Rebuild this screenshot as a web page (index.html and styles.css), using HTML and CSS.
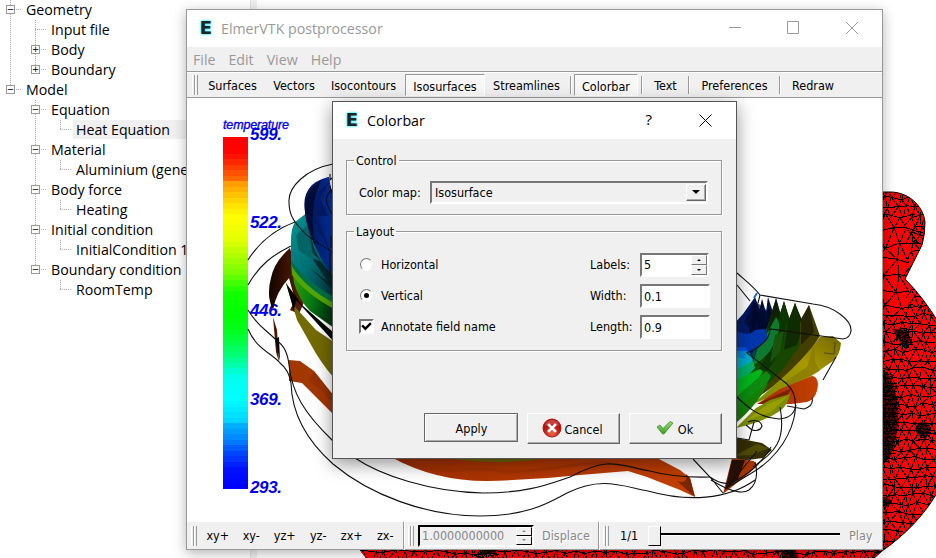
FILE: index.html
```html
<!DOCTYPE html>
<html lang="en">
<head>
<meta charset="utf-8">
<title>ElmerVTK postprocessor</title>
<link rel="stylesheet" href="styles.css">
</head>
<body>
<div class="desktop">
  <ul class="tree">
    <li><i class="cell full arm"><b class="box">−</b></i><span>Geometry</span></li>
    <li><i class="cell full"></i><i class="cell full arm"></i><span>Input file</span></li>
    <li><i class="cell full"></i><i class="cell full arm"><b class="box">+</b></i><span>Body</span></li>
    <li><i class="cell full"></i><i class="cell half arm"><b class="box">+</b></i><span>Boundary</span></li>
    <li><i class="cell half arm"><b class="box">−</b></i><span>Model</span></li>
    <li><i class="cell"></i><i class="cell full arm"><b class="box">−</b></i><span>Equation</span></li>
    <li><i class="cell"></i><i class="cell full"></i><i class="cell half arm"></i><span class="current">Heat Equation</span></li>
    <li><i class="cell"></i><i class="cell full arm"><b class="box">−</b></i><span>Material</span></li>
    <li><i class="cell"></i><i class="cell full"></i><i class="cell half arm"></i><span>Aluminium (generic)</span></li>
    <li><i class="cell"></i><i class="cell full arm"><b class="box">−</b></i><span>Body force</span></li>
    <li><i class="cell"></i><i class="cell full"></i><i class="cell half arm"></i><span>Heating</span></li>
    <li><i class="cell"></i><i class="cell full arm"><b class="box">−</b></i><span>Initial condition</span></li>
    <li><i class="cell"></i><i class="cell full"></i><i class="cell half arm"></i><span>InitialCondition 1</span></li>
    <li><i class="cell"></i><i class="cell half arm"><b class="box">−</b></i><span>Boundary condition</span></li>
    <li><i class="cell"></i><i class="cell"></i><i class="cell half arm"></i><span>RoomTemp</span></li>
  </ul>
  <div class="splitter"></div>
  <svg class="model" viewBox="257 0 679 558">
    <defs><clipPath id="body"><path d="M359 549L367 560H872L882 551C905 535 925 515 940 488V325Q924 298 905 279L922 245Q925 235 925 222C923 205 908 192 890 192H870V549Z"/></clipPath></defs>
    <g clip-path="url(#body)">
      <rect x="350" y="180" width="590" height="380" fill="#f00"/>
      <g fill="#6b0000"><ellipse cx="880" cy="416" rx="18" ry="47"/><path d="M892 329Q908 328 909 336L908 348Q900 345 892 329Z"/><circle cx="923" cy="429" r="7.5"/><circle cx="885" cy="502" r="5"/><path d="M779 548h16l5 12h-13Z"/><path d="M476 548h20v5h-14Z"/></g>
      <path id="mesh" class="mesh"/>
      <path id="finemesh" class="mesh"/>
    </g>
    <path d="M870 192H890C908 192 923 205 925 222Q925 235 922 245L905 279Q924 298 940 325M940 488C925 515 905 535 882 551L872 560" fill="none" stroke="#000"/>
  </svg>
</div>

<section class="window main">
  <header class="title">
    <span class="logo">E</span><h1>ElmerVTK postprocessor</h1>
    <svg class="controls" viewBox="0 0 140 20"><path d="M5 9.500h12M63.500 3.500h11v12h-11ZM122 4l12 12M134 4l-12 12" fill="none" stroke="#999"/></svg>
  </header>
  <nav class="menu"><span>File</span><span>Edit</span><span>View</span><span>Help</span></nav>
  <div class="toolbar top">
    <i class="grip"></i>
    <button class="w65">Surfaces</button><button class="w58">Vectors</button><button class="w81">Isocontours</button><button class="w80 on">Isosurfaces</button><button class="w83">Streamlines</button><i class="sep"></i><button class="w64 on">Colorbar</button><i class="sep"></i><button class="w43">Text</button><i class="sep"></i><button class="w87">Preferences</button><i class="sep"></i><button class="w62">Redraw</button>
  </div>
  <svg class="scene" viewBox="187 98 695 424">
    <defs>
      <linearGradient id="blue"><stop offset="0" stop-color="#001044"/><stop offset=".55" stop-color="#00237a"/><stop offset="1" stop-color="#0036b8"/></linearGradient>
      <linearGradient id="teal" x2="1" y2="1"><stop offset="0" stop-color="#009494"/><stop offset=".5" stop-color="#007174"/><stop offset="1" stop-color="#002f38"/></linearGradient>
      <linearGradient id="green" x2="1" y2=".6"><stop offset="0" stop-color="#3aa800"/><stop offset=".6" stop-color="#087c14"/><stop offset="1" stop-color="#003c10"/></linearGradient>
      <linearGradient id="brown" x2="1"><stop offset="0" stop-color="#120400"/><stop offset="1" stop-color="#642000"/></linearGradient>
      <linearGradient id="spike" x2="0" y2="1"><stop offset="0" stop-color="#0d1800"/><stop offset=".45" stop-color="#123800"/><stop offset="1" stop-color="#1f7c00"/></linearGradient>
      <linearGradient id="yellow" x1="0" y1="1" x2="1" y2="0"><stop offset="0" stop-color="#768b00"/><stop offset=".6" stop-color="#a89800"/><stop offset="1" stop-color="#716600"/></linearGradient>
      <linearGradient id="orange" x2="1"><stop offset="0" stop-color="#a33000"/><stop offset="1" stop-color="#c33f00"/></linearGradient>
    </defs>
    <g id="colorbar" shape-rendering="crispEdges"></g>
    <g class="bar-text">
      <text x="223" y="129" class="caption" textLength="66">temperature</text>
      <text x="250" y="140" textLength="32">599.</text><text x="250" y="228" textLength="32">522.</text><text x="250" y="316" textLength="32">446.</text><text x="250" y="405" textLength="32">369.</text><text x="250" y="493" textLength="32">293.</text>
    </g>
    <!-- left flank -->
    <path fill="url(#brown)" d="M290 248Q274 262 271 278Q266 296 273 310Q276 292 289 278L295 300L290 310L299 314L305 300Z"/>
    <path fill="#4c1600" d="M273 317L277 330L279 362L276 352Z"/><path fill="#000" d="M275 339l4-2 1 24Z"/>
    <path fill="#736a00" d="M285 280L297 320L310 343Q320 362 334 378V342L316 330L296 308Z"/>
    <path fill="#000" d="M286 283L294 311L296 300L334 342V333L302 305Z"/>
    <path fill="url(#green)" d="M291 260L294 283Q299 300 310 311L334 328V270Z"/>
    <path fill="#53a600" d="M291 262L304 277L334 302V309Q305 293 292 275Z"/>
    <path fill="#006f46" d="M291 256Q305 278 334 294V303Q305 288 291 265Z"/>
    <path fill="url(#teal)" d="M308 212L295 222Q291 229 291 240V260Q304 280 334 297V240Z"/>
    <path fill="#001f25" d="M311 235Q314 258 334 276V291L310 268L328 282L312 258L322 262L308 249Z" opacity=".8"/>
    <path fill="#006467" d="M296 235l12-10 6 35-15-9Z"/>
    <path fill="url(#blue)" d="M334 176Q320 178 312 185Q302 195 305 212Q307 240 334 278Z"/>
    <path fill="#000c35" d="M321 180Q305 192 305 213Q308 232 315 245Q308 208 321 180Z"/>
    <path fill="#001c67" d="M330 181l-10 18 8 17-11 0 14 38-17-33 4-28Z"/>
    <path fill="#fff" d="M329 174h4v24l-4-20Z"/><path d="M330 174v6l2-2M330 186l2 8M331 236v12M330 253v22" class="wire"/>
    <path fill="#a33700" d="M289 360L300 361L314 371L334 396V415L302 383L289 381Z"/>
    <path fill="#812800" d="M314 371L334 396V405Q319 386 308 381Z" opacity=".4"/>
    <!-- rim below the dialog -->
    <path fill="url(#orange)" d="M393 458Q435 481 487 481Q535 480 580 475L628 471L647 477L680 490L695 497L690 478L680 470L657 458Z"/>
    <path fill="#7a2600" d="M690 478L695 497L677 481Q688 485 686 474Z"/><path fill="#716900" d="M445 458Q500 466 550 458Z"/>
    <path d="M400 460q30 12 60 10t40 1 60-4 50-2" fill="none" stroke="#9b3000" stroke-width="3" opacity=".6"/>
    <!-- right flank -->
    <path fill="#001a66" d="M733 325L743 314L755 297L761 313L762 299L766 312L768 297L774 315L776 298L781 315L780 350L737 358Z"/>
    <path fill="#000a26" d="M755 298l4 22-10 16 3-22ZM762 299l5 28-9 13 0-24ZM768 298l5 22-7 14Z"/>
    <path fill="#000a30" d="M754 300L774 316L768 334L752 332L744 322Z" opacity=".7"/>
    <path fill="#004443" d="M776 298L781 318L763 367L748 360L767 328Z"/>
    <path fill="url(#spike)" d="M769 320L776 299L780 314L784 301L790 320L795 303L804 325L800 350L765 390L735 410V370L763 355Z"/>
    <path fill="#0c3600" d="M784 301L790 323Q782 355 758 383L752 378Q774 350 778 320Z"/>
    <path fill="#164600" d="M795 303L806 337Q790 370 757 398L751 393Q782 358 785 330Z"/>
    <path fill="#0d2400" d="M795 303L803 326L797 345L784 350L788 322Z" opacity=".75"/>
    <path fill="#423f00" d="M809 305L820 336L805 359Q780 384 750 402L785 367L800 345L800 323Z"/>
    <path fill="#252500" d="M809 305L814 332L801 345L801 319Z"/>
    <path fill="#0d7a2f" d="M776 317Q783 325 775 341Q770 356 752 366L758 348L769 330Z"/><path fill="#17550c" d="M775 335l9-4-4 21-10 11Z"/>
    <path fill="url(#yellow)" d="M820 337L833 336L841 343Q840 355 833 361L810 377L770 397L753 404L780 380Q802 361 820 337Z"/>
    <path fill="#857700" d="M814 345l-7 22-24 16 8 2 29-14-5-10Z" opacity=".65"/><path d="M835 342l-1 12-10-1" stroke="#4d4500" fill="none"/>
    <path fill="url(#orange)" d="M812 376Q817 376 818 384Q817 399 807 402L792 404L757 404L780 389Z"/><path fill="#792100" d="M757 404l35-16-9 13Z"/>
    <path fill="#0036ac" d="M736 331Q749 337 755 330L765 329L768 338Q758 349 747 353L736 350Z"/><path fill="#0050dc" d="M736 347h9l6 7-15 0Z"/>
    <path fill="#00aac6" d="M736 352L749 352L753 360L747 371L736 375Z"/><path fill="#0089d6" d="M736 351h11l-2 8-9-2Z"/>
    <path fill="#00ae65" d="M736 370L753 361L755 368Q748 376 736 385Z"/>
    <path fill="#00b51c" d="M736 380L760 369L763 372Q753 388 736 398Z"/>
    <path fill="#0c8b10" d="M736 397L766 371L771 376Q758 402 736 412Z"/>
    <path fill="#167f00" d="M736 410L757 391L768 383Q759 403 736 423Z"/>
    <path fill="#7c8e00" d="M790 394Q788 405 780 411Q764 422 736 428L756 408L770 400Z"/><path fill="#989e00" d="M788 396l-17 16-26 9 23-17Z"/>
    <path fill="#342f00" d="M736 438L762 443L772 450L763 458L732 462Z"/><path fill="#514b00" d="M757 444l12 4-17 7-18 1Z"/>
    <path fill="#a83500" d="M732 458L754 461L757 466L747 475L723 494Z"/><path fill="#281006" d="M732 460l13 0-7 19-13 11Z"/>
    <g class="wire">
      <path d="M333 164C306 169 288 187 289 202C289 215 294 221 300 228C310 241 324 245 333 253M248 260C260 241 276 229 295 222M248 285C260 264 273 255 291 246M333 189Q320 198 333 215"/>
      <path d="M248 310C258 327 268 331 277 341Q287 347 289 365C292 393 304 413 333 441L355 458C380 475 430 492 483 493C530 493 551 483 570 477C610 455 620 466 650 471Q675 478 710 477"/>
      <path d="M248 329C257 350 272 353 280 363Q289 370 291 383C292 422 315 448 333 464C370 495 426 516 480 516C529 516 550 502 567 493C601 476 622 486 648 491C687 502 727 500 755 480"/>
      <path d="M737 273C746 281 754 287 760 295L813 304C835 306 852 321 851 331Q850 338 843 339L770 329Q770 343 747 353L787 384Q799 395 794 418C788 443 770 463 750 474L725 489"/>
      <path d="M737 285L750 301M737 397C747 407 760 418 779 419Q794 418 796 405M780 407C787 444 772 453 753 467M812 398Q814 406 804 409L787 406M836 357L823 380M748 422Q760 418 762 426Q760 432 752 430L746 425"/>
      <path d="M693 459L710 477L723 493M710 477Q725 488 737 480Q759 468 771 447M755 462Q760 481 749 490Q739 497 711 480M757 451L744 467L728 486M737 438L749 440L754 422M760 295L758 303"/>
    </g>
    <path d="M757 293l-3 5" stroke="#2268dd" stroke-width="2"/>
  </svg>
  <div class="toolbar bottom">
    <i class="grip"></i>
    <div class="axes"><button>xy+</button><button>xy-</button><button>yz+</button><button>yz-</button><button>zx+</button><button>zx-</button></div>
    <i class="rule"></i><i class="grip"></i>
    <div class="spin disabled"><span>1.0000000000</span><div class="steps"><i class="up"></i><i class="down"></i></div></div>
    <button class="displace dim">Displace</button>
    <i class="rule"></i><i class="grip"></i>
    <span class="frame">1/1</span>
    <div class="slider"><i class="thumb"></i><i class="track"></i></div>
    <button class="play dim">Play</button>
  </div>
</section>

<section class="window dialog">
  <header class="title">
    <span class="logo">E</span><h1>Colorbar</h1>
    <span class="help">?</span>
    <svg class="close" viewBox="0 0 13 13"><path d="M.5.5l12 12M12.500.5l-12 12" stroke="#000" fill="none"/></svg>
  </header>
  <div class="content">
    <fieldset class="control"><legend>Control</legend>
      <label>Color map:</label>
      <div class="combo"><span>Isosurface</span><i class="drop"></i></div>
    </fieldset>
    <fieldset class="layout"><legend>Layout</legend>
      <i class="radio"></i><span>Horizontal</span><label>Labels:</label>
      <div class="spin"><span>5</span><div class="steps"><i class="up"></i><i class="down"></i></div></div>
      <i class="radio picked"></i><span>Vertical</span><label>Width:</label><div class="field">0.1</div>
      <i class="check"><svg viewBox="0 0 10 10"><path d="M1 4l3 3 5-5" fill="none" stroke="#000" stroke-width="2.200"/></svg></i><span>Annotate field name</span><label>Length:</label><div class="field">0.9</div>
    </fieldset>
    <div class="actions">
      <button class="default">Apply</button>
      <button><svg width="20" height="20" viewBox="0 0 20 20"><defs><radialGradient id="stop" cy=".8"><stop stop-color="#ed6948"/><stop offset="1" stop-color="#b50f0c"/></radialGradient></defs><circle cx="10" cy="10" r="9" fill="url(#stop)" stroke="#a31b17"/><path d="M3 8a7 6 0 0 1 14 0Q10 5 3 8Z" fill="#fff" opacity=".22"/><path d="M7 7l6 6M13 7l-6 6" stroke="#fff" stroke-width="2.600" stroke-linecap="square"/></svg><span>Cancel</span></button>
      <button class="ok"><svg width="18" height="16" viewBox="0 0 18 16"><defs><linearGradient id="tick" x2="0" y2="1"><stop stop-color="#9bd877"/><stop offset="1" stop-color="#3d9c28"/></linearGradient></defs><path d="M1 7L4 5L7 8.500L14 1.500L17 3L8 14H6.500Z" fill="url(#tick)" stroke="#54a13d"/></svg><span>Ok</span></button>
    </div>
  </div>
</section>
<script src="scene.js"></script>
</body>
</html>
```
FILE: styles.css
```css
* { box-sizing: border-box; }
body { margin: 0; width: 936px; height: 558px; overflow: hidden; position: relative; background: #fff; font: 12.5px "DejaVu Sans Condensed", "DejaVu Sans", sans-serif; color: #000; }
button { border: 0; background: none; padding: 0; font: inherit; color: inherit; white-space: nowrap; }
h1 { margin: 0; font: inherit; }
i { font-style: normal; flex: none; }

/* background application */
.desktop { display: flex; height: 558px; }
.tree { width: 251px; margin: 0; padding: 0; list-style: none; border-right: 1px solid #e0e0e0; font: 14.2px/20px "Open Sans", "Noto Sans", sans-serif; overflow: hidden; }
.tree li { display: flex; height: 20px; white-space: nowrap; }
.tree span { padding: 0 3px 0 1px; }
.tree .current { background: #f0f0f0; width: 130px; height: 19px; margin-left: -2px; padding-left: 3px; }
.cell { width: 25px; height: 20px; display: flex; align-items: center; padding-left: 6px; background-repeat: no-repeat; }
.full { background-image: repeating-linear-gradient(#aaa 0 1px, transparent 1px 2px); background-size: 1px 20px; background-position: 10px 0; }
.half { background-image: repeating-linear-gradient(#aaa 0 1px, transparent 1px 2px); background-size: 1px 10px; background-position: 10px 0; }
.arm.full, .arm.half { background-image: repeating-linear-gradient(#aaa 0 1px, transparent 1px 2px), repeating-linear-gradient(90deg, #aaa 0 1px, transparent 1px 2px); background-position: 10px 0, 10px 9px; }
.arm.full { background-size: 1px 20px, 12px 1px; }
.arm.half { background-size: 1px 10px, 12px 1px; }
.box { width: 9px; height: 9px; margin-top: -1px; border: 1px solid #999; background: #fff; font: 9px/7px "DejaVu Sans", sans-serif; text-align: center; display: flex; justify-content: center; }
.splitter { width: 6px; background: #f0f0f0; }
.model { width: 679px; height: 558px; }
.mesh { fill: none; stroke: #000; stroke-width: 1; shape-rendering: crispEdges; }

/* windows */
.window { position: absolute; display: flex; flex-direction: column; background: #f0f0f0; }
.main { left: 186px; top: 9px; width: 697px; height: 541px; border: 1px solid #999; box-shadow: 0 3px 12px rgba(0,0,0,.3); }
.dialog { left: 332px; top: 101px; width: 405px; height: 358px; border: 1px solid #555; box-shadow: 0 5px 17px rgba(0,0,0,.42); }
.title { height: 37px; flex: none; background: #fff; display: flex; align-items: center; font: 14.2px "Open Sans", "Noto Sans", sans-serif; }
.main .title { color: #999; }
.logo { width: 16px; margin: -2px 0 0 11px; text-align: center; font: bold 18px "DejaVu Sans", sans-serif; color: #222; text-shadow: 0 0 2px #3ee, 0 0 2px #3ee, 0 0 3px #6ff; }
.title h1 { margin-left: 7px; }
.controls { width: 140px; height: 20px; margin-left: auto; margin-right: 18px; margin-top: -1px; }
.menu { height: 25px; flex: none; border-bottom: 1px solid #999; display: flex; gap: 13px; padding: 3px 0 0 6px; font: 14.2px/20px "Open Sans", "Noto Sans", sans-serif; color: #999; }

.toolbar { display: flex; align-items: center; flex: none; }
.top { height: 26px; border-bottom: 1px solid #999; border-top: 1px solid #fff; }
.top button { height: 22px; flex: none; }
.grip { width: 6px; height: 20px; margin-left: 5px; background: linear-gradient(90deg, #fff 0 1px, #f0f0f0 1px 2px, #999 2px 3px, #fff 3px 4px, #f0f0f0 4px 5px, #999 5px); }
.bottom .grip { margin-left: 4px; }
.top .grip { margin-right: 2px; }
.w65 { width: 65px; } .w58 { width: 58px; } .w81 { width: 81px; } .w80 { width: 80px; } .w83 { width: 83px; }
.top .w80 { margin-left: 1px; }
.w64 { width: 64px; } .w43 { width: 43px; } .w87 { width: 87px; } .w62 { width: 62px; }
.on { border: 1px solid; border-color: #999 #fff #fff #999; background: #f8f8f8; padding-top: 2px; }
.sep { width: 2px; height: 18px; margin: 0 1px; border-left: 1px solid #999; border-right: 1px solid #fff; }
.w64 + .sep { margin-left: 3px; }
.w83 + .sep { margin: 0 2px; }
.scene { width: 695px; height: 424px; flex: none; background: #fff; }
.wire path, path.wire { fill: none; stroke: #111; stroke-width: 1.100; }
.bar-text { fill: #00e; font: italic bold 17px "Liberation Sans", sans-serif; }
.bar-text .caption { font-size: 12.5px; font-weight: normal; stroke: #00e; stroke-width: .35px; }

.bottom { height: 28px; padding-bottom: 1px; }
.axes { display: flex; margin-left: 4px; width: 202px; }
.axes button { width: 33.500px; }
.rule { width: 2px; height: 28px; border-left: 1px solid #999; border-right: 1px solid #fff; }
.bottom .rule + .grip { margin-left: 3px; }
.spin { display: flex; justify-content: space-between; align-items: center; height: 24px; width: 69px; border: 2px solid; border-color: #777 #fff #fff #777; background: #fff; padding-left: 2px; }
.spin.disabled { width: 116px; height: 22px; margin-left: 4px; background: #f0f0f0; border-color: #000 #fff #fff #000; color: #888; letter-spacing: 0; }
.steps { width: 16px; align-self: stretch; display: flex; flex-direction: column; flex: none; }
.steps i { flex: 1; display: flex; align-items: center; justify-content: center; background: #f0f0f0; border: 1px solid; border-color: #fff #777 #777 #fff; }
.steps i::after { content: ""; border: 2px solid transparent; }
.steps .up::after { border-top-width: 0; border-bottom-color: #000; }
.steps .down::after { border-bottom-width: 0; border-top-color: #000; }
.disabled .steps i { border-right-color: #000; border-bottom-color: #000; }
.disabled .steps .up::after { border-bottom-color: #888; }
.disabled .steps .down::after { border-top-color: #888; }
.dim { color: #888; text-shadow: 1px 1px #fff; }
.displace { width: 64px; }
.frame { width: 39px; padding-left: 11px; }
.slider { display: flex; align-items: center; width: 192px; }
.thumb { width: 13px; height: 20px; border: 1px solid; border-color: #fff #000 #000 #fff; background: #f0f0f0; }
.track { flex: 1; height: 3px; margin-top: -2px; border-top: 2px solid #000; border-bottom: 1px solid #fff; }
.play { margin-left: 9px; }

/* colorbar dialog */
.help { margin-left: auto; font-size: 15px; margin-top: -3px; }
.close { width: 13px; height: 13px; margin: -1px 24px 0 47px; }
.content { padding: 14px 14px 0 13px; }
fieldset { margin: 0; min-width: 0; border: 1px solid #999; box-shadow: 1px 1px #fff, inset 1px 1px #fff; }
legend { padding: 0 2px; line-height: 15px; margin-left: -5px; }
.control { height: 62px; display: flex; align-items: center; padding: 2px 13px 0 12px; }
.control label { width: 71px; }
.combo { flex: 1; height: 23px; border: 2px solid; border-color: #777 #fff #fff #777; display: flex; align-items: center; justify-content: space-between; padding: 0 0 0 3px; }
.drop { width: 20px; height: 17px; border: 1px solid; border-color: #fff #666 #666 #fff; box-shadow: inset -1px -1px #aaa; display: flex; align-items: center; justify-content: center; }
.drop::after { content: ""; border: 4px solid transparent; border-bottom: 0; border-top-color: #000; }
.layout { height: 127px; margin-top: 9px; padding: 10px 12px 0; display: grid; grid-template-columns: 22px 209px 50px 69px; grid-auto-rows: 31px; align-items: center; }
.layout > span { white-space: nowrap; }
.radio { width: 13px; height: 13px; border-radius: 50%; border: 1px solid; border-color: #777 #eee #fff #777; background: #fff; display: flex; align-items: center; justify-content: center; margin-left: 1px; }
.picked::after { content: ""; width: 5px; height: 5px; border-radius: 50%; background: #000; }
.check { width: 15px; height: 15px; border: 2px solid; border-color: #777 #fff #fff #777; background: #fff; display: flex; }
.check svg { width: 11px; height: 11px; }
.field { height: 24px; width: 70px; border: 2px solid; border-color: #777 #fff #fff #777; background: #fff; padding-left: 2px; line-height: 21px; }
.actions { display: flex; align-items: flex-start; gap: 9px; margin: 62px 0 0 78px; }
.actions button { width: 93px; height: 31px; display: flex; align-items: center; justify-content: center; gap: 2px; border: 1px solid; border-color: #fff #666 #666 #fff; box-shadow: inset -1px -1px #aaa; }
.actions button svg { margin: -2px 0 0 -2px; }
.actions button span { padding-top: 1px; }
.actions .default { width: 94px; height: 29px; padding: 2px 0 0 1px; border-color: #666; box-shadow: inset 1px 1px #fff, inset -1px -1px #aaa; }
.actions .ok { gap: 4px; }
```
FILE: scene.js
```js
const NS = "http://www.w3.org/2000/svg";

// Colour scale, as colour stops by vertical position
const stops = [[137, 255, 0, 0], [153, 255, 4, 0], [180, 255, 112, 0], [182, 255, 155, 0], [208, 255, 235, 0], [218, 255, 255, 0], [240, 225, 255, 0], [272, 120, 255, 0], [292, 20, 255, 0], [312, 0, 255, 0], [330, 0, 255, 25], [355, 0, 255, 120], [376, 0, 255, 235], [398, 0, 255, 255], [420, 0, 215, 255], [424, 0, 180, 255], [444, 0, 115, 255], [450, 0, 80, 255], [470, 0, 15, 255], [489, 0, 0, 255]];
const bar = document.getElementById("colorbar");
const bands = 64, step = 352 / bands;
for (let n = 0; n < bands; n++) {
  const y = 137 + n * step, mid = y + step / 2;
  let k = 0;
  while (stops[k + 1][0] < mid) k++;
  const a = stops[k], b = stops[k + 1], t = (mid - a[0]) / (b[0] - a[0]);
  const c = [1, 2, 3].map(j => Math.round(a[j] + (b[j] - a[j]) * t));
  const r = document.createElementNS(NS, "rect");
  r.setAttribute("x", 223);
  r.setAttribute("y", Math.round(y));
  r.setAttribute("width", 25);
  r.setAttribute("height", Math.round(y + step) - Math.round(y));
  r.setAttribute("fill", `rgb(${c})`);
  bar.appendChild(r);
}

// Jittered triangle mesh
let seed = 7;
const rnd = () => (seed = (seed * 16807) % 2147483647) / 2147483647;
function mesh(x0, y0, x1, y1, s, keep) {
  const cols = Math.ceil((x1 - x0) / s) + 2, rows = Math.ceil((y1 - y0) / s) + 2, p = [];
  for (let j = 0; j < rows; j++) {
    p.push([]);
    for (let i = 0; i < cols; i++) {
      p[j].push([x0 + (i + (j % 2) / 2 + (rnd() - .5) * .5) * s, y0 + (j + (rnd() - .5) * .5) * s]);
    }
  }
  let d = "";
  const line = (a, b) => {
    if (b && keep(a[0], a[1])) d += `M${a[0].toFixed(1)} ${a[1].toFixed(1)}L${b[0].toFixed(1)} ${b[1].toFixed(1)}`;
  };
  for (let j = 0; j < rows; j++) {
    for (let i = 0; i < cols; i++) {
      line(p[j][i], p[j][i + 1]);
      if (p[j + 1]) {
        line(p[j][i], p[j + 1][i]);
        line(p[j][i], p[j + 1][i + (j % 2 ? 1 : -1)]);
      }
    }
  }
  return d;
}
const inLobe = (x, y) => y < 310 && x < 908 && y > 208;
document.getElementById("mesh").setAttribute("d",
  mesh(865, 180, 940, 560, 9, (x, y) => !inLobe(x, y)) +
  mesh(865, 200, 915, 320, 15, inLobe) +
  mesh(350, 542, 875, 560, 10, () => true));
const dark = (x, y) => ((x - 880) / 18) ** 2 + ((y - 416) / 47) ** 2 < 1 || Math.hypot(x - 923, y - 429) < 8 ||
  (x > 894 && x < 909 && y > 328 && y < 348 && y - 328 < (x - 890) * 1.6) || Math.hypot(x - 885, y - 502) < 5 ||
  (y > 547 && (Math.abs(x - 788) < 8 || Math.abs(x - 486) < 9));
document.getElementById("finemesh").setAttribute("d", mesh(870, 320, 935, 510, 4.2, dark) + mesh(470, 546, 800, 560, 4, dark));
```
